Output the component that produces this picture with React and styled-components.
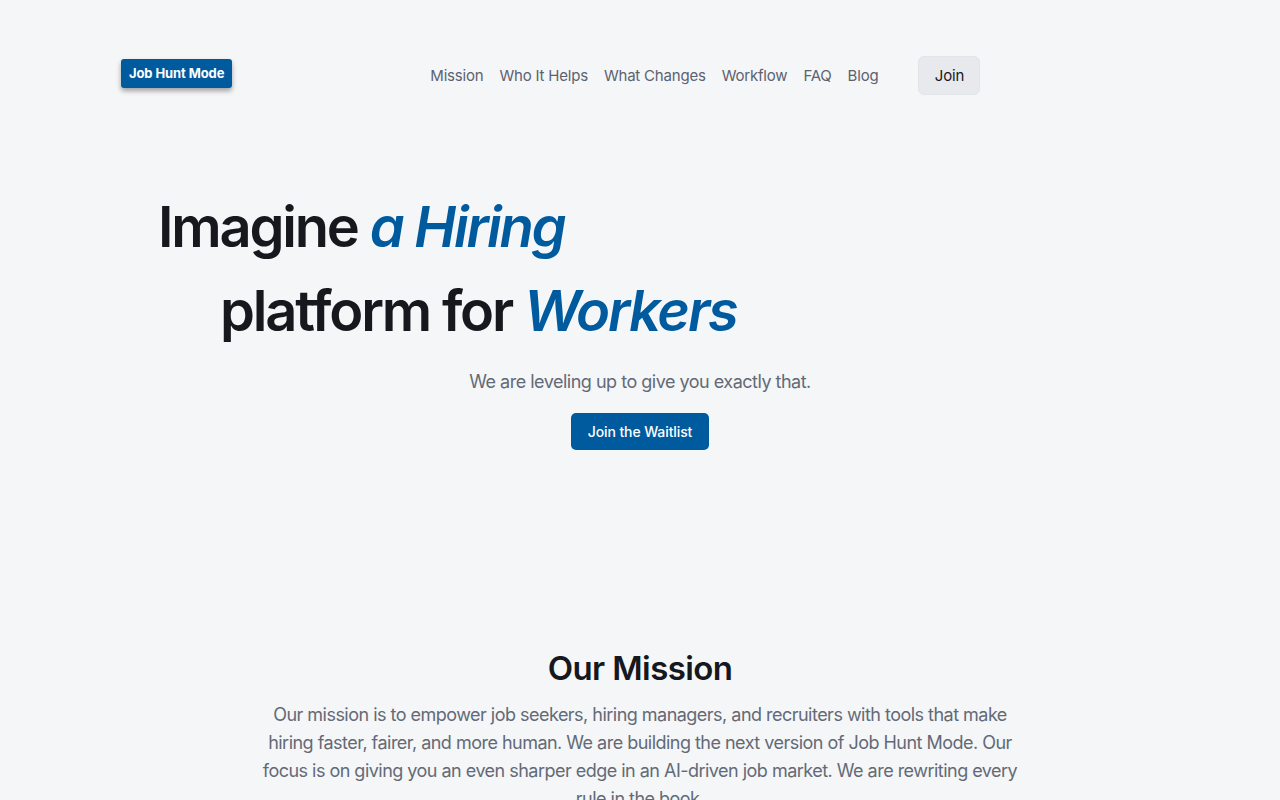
import React from "react";
import styled, { createGlobalStyle } from "styled-components";

const GlobalStyle = createGlobalStyle`
  * { box-sizing: border-box; }
  body {
    margin: 0;
    background: #f5f6f8;
    font-family: Inter, "Noto Sans", Roboto, sans-serif;
    color: #16181d;
  }
`;

const Page = styled.div`
  min-height: 800px;
`;

const Header = styled.header`
  display: flex;
  align-items: center;
  padding: 56px 0 0 121px;
  height: 95px;
`;

const Logo = styled.a`
  display: inline-flex;
  align-items: center;
  height: 29px;
  padding: 0 8px;
  margin-top: -5px;
  background: #005a9e;
  color: #fff;
  font-size: 13px;
  font-weight: 700;
  letter-spacing: -0.1px;
  border-radius: 3px;
  box-shadow: 0 3px 5px rgba(0, 0, 0, 0.35);
  text-decoration: none;
`;

const Nav = styled.nav`
  display: flex;
  align-items: center;
  gap: 16px;
  margin-left: 198px;
`;

const NavLink = styled.a`
  font-size: 15px;
  letter-spacing: -0.2px;
  color: #5b6270;
  text-decoration: none;
`;

const JoinButton = styled.button`
  margin-left: 24px;
  width: 62px;
  height: 39px;
  border: 1px solid #e1e4e9;
  border-radius: 6px;
  background: #e7e9ed;
  color: #16181d;
  font: 400 15px Inter, sans-serif;
  letter-spacing: -0.2px;
`;

const Hero = styled.section`
  padding-top: 90px;
`;

const Headline = styled.h1`
  margin: 0;
  font-size: 56px;
  line-height: 84px;
  font-weight: 600;
  letter-spacing: -2.2px;
  color: #16181d;
`;

const HeadLine = styled.span`
  display: block;
  padding-left: ${(p) => p.$indent}px;
`;

const Accent = styled.em`
  color: #005a9e;
  font-style: italic;
`;

const Lead = styled.p`
  margin: 15px 0 0;
  text-align: center;
  font-size: 18px;
  line-height: 28px;
  letter-spacing: -0.5px;
  color: #636a77;
`;

const CtaRow = styled.div`
  display: flex;
  justify-content: center;
  margin-top: 17px;
`;

const Cta = styled.button`
  width: 138px;
  height: 37px;
  border: none;
  border-radius: 5px;
  background: #005a9e;
  color: #fff;
  font: 500 14px Inter, sans-serif;
  letter-spacing: -0.1px;
`;

const Mission = styled.section`
  padding-top: 196px;
  display: flex;
  flex-direction: column;
  align-items: center;
`;

const SectionTitle = styled.h2`
  margin: 0;
  font-size: 33px;
  line-height: 44px;
  font-weight: 600;
  letter-spacing: -0.6px;
  color: #16181d;
`;

const Body = styled.p`
  margin: 11px 0 0;
  width: 770px;
  text-align: center;
  font-size: 18px;
  line-height: 28px;
  letter-spacing: -0.52px;
  color: #636a77;
`;

const links = ["Mission", "Who It Helps", "What Changes", "Workflow", "FAQ", "Blog"];

export default function App() {
  return (
    <Page>
      <GlobalStyle />
      <Header>
        <Logo href="#">Job Hunt Mode</Logo>
        <Nav>
          {links.map((l) => (
            <NavLink key={l} href="#">{l}</NavLink>
          ))}
          <JoinButton>Join</JoinButton>
        </Nav>
      </Header>
      <Hero>
        <Headline>
          <HeadLine $indent={158}>
            Imagine <Accent>a Hiring</Accent>
          </HeadLine>
          <HeadLine $indent={220}>
            platform for <Accent>Workers</Accent>
          </HeadLine>
        </Headline>
        <Lead>We are leveling up to give you exactly that.</Lead>
        <CtaRow>
          <Cta>Join the Waitlist</Cta>
        </CtaRow>
      </Hero>
      <Mission>
        <SectionTitle>Our Mission</SectionTitle>
        <Body>
          Our mission is to empower job seekers, hiring managers, and recruiters with tools that make
          hiring faster, fairer, and more human. We are building the next version of Job Hunt Mode. Our
          focus is on giving you an even sharper edge in an AI-driven job market. We are rewriting every
          rule in the book.
        </Body>
      </Mission>
    </Page>
  );
}
